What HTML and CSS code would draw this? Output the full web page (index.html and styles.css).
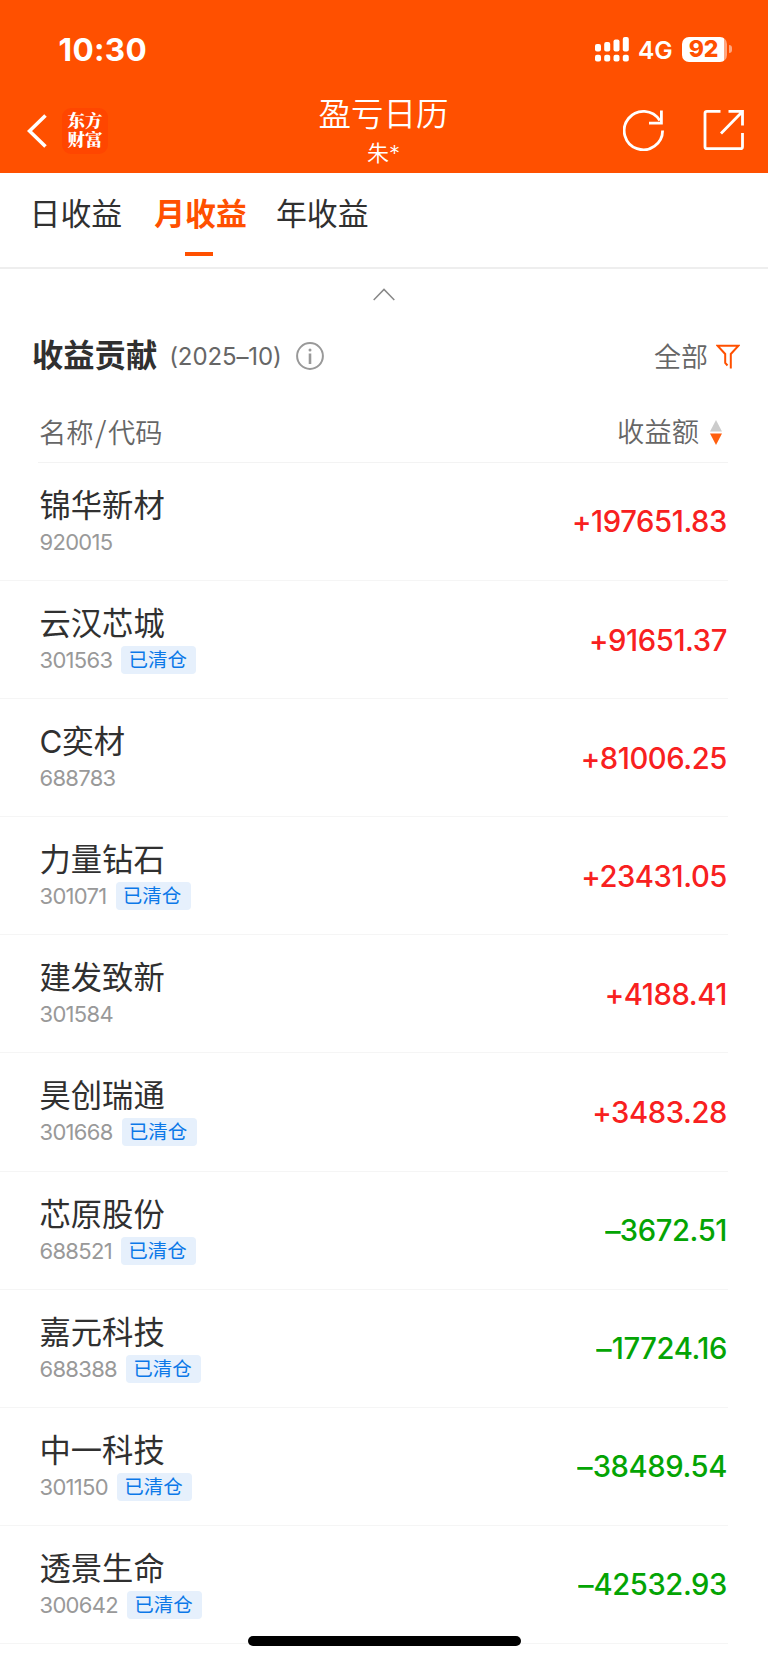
FILE: index.html
```html
<!DOCTYPE html>
<html lang="zh-CN">
<head>
<meta charset="utf-8">
<title>盈亏日历</title>
<link rel="stylesheet" href="styles.css">
</head>
<body>
<header class="top">
  <div class="status">
    <span class="clock">10:30</span>
    <div class="status-right">
      <svg class="signal" width="34" height="25" viewBox="0 0 34 25" fill="#fff">
        <rect x="0" y="7" width="6" height="7.5" rx="2"/><rect x="9.2" y="5" width="6" height="9.5" rx="2"/><rect x="18.5" y="2.6" width="6" height="11.9" rx="2"/><rect x="27.8" y="0" width="6" height="14.5" rx="2"/>
        <rect x="0" y="17.8" width="6" height="6.6" rx="2"/><rect x="9.2" y="17.8" width="6" height="6.6" rx="2"/><rect x="18.5" y="17.8" width="6" height="6.6" rx="2"/><rect x="27.8" y="17.8" width="6" height="6.6" rx="2"/>
      </svg>
      <span class="network">4G</span>
      <div class="battery"><span class="level">92</span></div>
      <i class="battery-cap"></i>
    </div>
  </div>
  <nav class="nav">
    <div class="nav-left">
      <svg width="20" height="34" viewBox="0 0 20 34" fill="none" stroke="#fff" stroke-width="3.6"><path d="M18.5 1.5 2.5 17l16 15.500"/></svg>
      <div class="logo">东方<br>财富</div>
    </div>
    <div class="heading"><h1>盈亏日历</h1><p>朱*</p></div>
    <div class="nav-right">
      <svg width="42" height="42" viewBox="0 0 42 42" fill="none" stroke="#fff" stroke-width="2.800"><path d="M39.600 21.500A19.200 19.200 0 1 1 36.800 11.600"/><path d="M38.400 1.500v12.600H26"/></svg>
      <svg width="42" height="42" viewBox="0 0 42 42" fill="none" stroke="#fff" stroke-width="2.800"><path d="M17.500 2.300H4q-2 0-2 2V37.700q0 2 2 2H37.500q2 0 2-2V24"/><path d="M25.500 2.300H39.500V16.500M39 3 18 24.500"/></svg>
    </div>
  </nav>
</header>
<div class="tabs">
  <span class="tab">日收益</span><span class="tab active">月收益</span><span class="tab">年收益</span>
</div>
<div class="collapse"><svg width="22" height="13" viewBox="0 0 22 13" fill="none" stroke="#888" stroke-width="1.500"><path d="M.7 12 11 1.400 21.300 12"/></svg></div>
<section class="title-row">
  <h2>收益贡献</h2><span class="period">(2025–10)</span>
  <svg class="info" width="28" height="28" viewBox="0 0 28 28"><circle cx="14" cy="14" r="12.900" fill="none" stroke="#999" stroke-width="2"/><path d="M14 11.500v10.500" stroke="#999" stroke-width="2.600"/><circle cx="14" cy="8" r="1.500" fill="#999"/></svg>
  <span class="filter">全部</span>
  <svg class="funnel" width="24" height="25" viewBox="0 0 24 25" fill="none" stroke="#ff5000" stroke-width="2"><path d="M11.500 21.500 9.200 18.800V10L1.500 1.700H22.500L14.800 10V24.500"/></svg>
</section>
<section class="columns">
  <span>名称<i class="slash">/</i>代码</span><span class="sort">收益额</span>
  <svg width="12" height="25" viewBox="0 0 12 25"><path d="M6 0 12 11.500H0z" fill="#ccc"/><path d="M0 13.500H12L6 25z" fill="#ff5f0f"/></svg>
</section>
<main class="list">
  <div class="row"><div class="stock"><b class="name">锦华新材</b><div class="meta"><span class="code">920015</span></div></div><span class="amount up">+197651.83</span></div>
  <div class="row"><div class="stock"><b class="name">云汉芯城</b><div class="meta"><span class="code">301563</span><em class="tag">已清仓</em></div></div><span class="amount up">+91651.37</span></div>
  <div class="row"><div class="stock"><b class="name">C奕材</b><div class="meta"><span class="code">688783</span></div></div><span class="amount up">+81006.25</span></div>
  <div class="row"><div class="stock"><b class="name">力量钻石</b><div class="meta"><span class="code">301071</span><em class="tag">已清仓</em></div></div><span class="amount up">+23431.05</span></div>
  <div class="row"><div class="stock"><b class="name">建发致新</b><div class="meta"><span class="code">301584</span></div></div><span class="amount up">+4188.41</span></div>
  <div class="row"><div class="stock"><b class="name">昊创瑞通</b><div class="meta"><span class="code">301668</span><em class="tag">已清仓</em></div></div><span class="amount up">+3483.28</span></div>
  <div class="row"><div class="stock"><b class="name">芯原股份</b><div class="meta"><span class="code">688521</span><em class="tag">已清仓</em></div></div><span class="amount down"><i class="minus">–</i>3672.51</span></div>
  <div class="row"><div class="stock"><b class="name">嘉元科技</b><div class="meta"><span class="code">688388</span><em class="tag">已清仓</em></div></div><span class="amount down"><i class="minus">–</i>17724.16</span></div>
  <div class="row"><div class="stock"><b class="name">中一科技</b><div class="meta"><span class="code">301150</span><em class="tag">已清仓</em></div></div><span class="amount down"><i class="minus">–</i>38489.54</span></div>
  <div class="row"><div class="stock"><b class="name">透景生命</b><div class="meta"><span class="code">300642</span><em class="tag">已清仓</em></div></div><span class="amount down"><i class="minus">–</i>42532.93</span></div>
</main>
<div class="home-bar"></div>
</body>
</html>
```
FILE: styles.css
```css
* { box-sizing: border-box; }
body { margin: 0; width: 768px; height: 1663px; overflow: hidden; position: relative; background: #fff; color: #303030; font-family: Inter, "Noto Sans CJK SC", sans-serif; }
h1, h2, p { margin: 0; font-weight: 400; }
svg { display: block; flex: none; }
.top { height: 173.300px; background: #ff5000; color: #fff; }
.status { height: 88px; padding: 10px 36px 0 58.500px; display: flex; align-items: center; justify-content: space-between; }
.clock { font-size: 31.500px; font-weight: 700; letter-spacing: .3px; }
.status-right { display: flex; align-items: center; }
.network { margin-left: 9px; width: 44px; font-size: 24.500px; font-weight: 600; line-height: 30px; padding-top: 1px; letter-spacing: -.1px; }
.battery { width: 45px; height: 25px; border-radius: 7px; background: linear-gradient(90deg, #fff 42px, #ffa780 42px); display: flex; justify-content: center; align-items: center; padding-right: 2px; }
.level { color: #ff5000; font-size: 23px; font-weight: 800; line-height: 25px; letter-spacing: -.2px; }
.battery-cap { width: 3px; height: 8px; margin-left: 2px; border-radius: 0 3px 3px 0; background: #ffa780; }
.nav { height: 85px; padding: 0 23px 0 27px; display: grid; grid-template-columns: 1fr auto 1fr; }
.nav-left { display: flex; align-items: center; gap: 15px; }
.logo { width: 46px; height: 46px; padding-top: 2px; text-align: center; border-radius: 9px; background: #ff4600; font: 900 17.500px/19.500px "Noto Serif CJK SC", "Noto Sans CJK SC", serif; }
.heading { text-align: center; padding-top: 5px; transform: translateX(-2.500px); }
.heading h1 { font-size: 32.500px; line-height: 44px; font-weight: 350; }
.heading p { font-size: 22px; line-height: 33px; font-weight: 350; }
.nav-right { display: flex; justify-content: flex-end; align-items: center; gap: 38px; padding-bottom: 2px; }
.tabs { height: 96.200px; border-bottom: 2px solid #eee; display: flex; padding: 18px 30px 0 29.500px; gap: 31px; }
.tab { font-size: 30.900px; line-height: 46px; height: 65px; }
.tab.active { color: #ff5000; font-weight: 600; display: flex; flex-direction: column; align-items: center; justify-content: space-between; padding-left: 1px; margin-right: -2px; }
.tab.active::after { content: ""; width: 28px; height: 4px; margin-right: 3px; background: #ff5000; }
.collapse { height: 50.500px; display: flex; justify-content: center; padding-top: 18.500px; }
.title-row { height: 72px; padding: 0 27px 0 32px; display: flex; align-items: center; }
.title-row h2 { font-size: 31.300px; line-height: 46px; font-weight: 600; }
.period { margin-left: 12px; padding-top: 2px; font-size: 24px; font-weight: 400; letter-spacing: -.1px; color: #666; }
.info { margin-left: 14.500px; }
.filter { margin-left: auto; font-size: 27px; color: #666; font-weight: 350; }
.funnel { margin-left: 8px; margin-top: 2px; margin-right: 1px; }
.columns { height: 71px; margin: 0 40px 0 38px; padding: 12px 6px 0 1px; border-bottom: 1px solid #f3f3f3; display: flex; align-items: center; color: #666; font-size: 27.300px; line-height: 36px; font-weight: 350; }
.columns span { margin-top: 1px; }
.slash { font: 350 29px/30px "Noto Sans CJK SC", sans-serif; margin: 0 1.500px; }
.sort { margin-left: auto; margin-right: 11px; }
.row { height: 118.100px; margin-right: 40px; padding: 21px 0 0 39.500px; border-bottom: 1.500px solid #f5f5f5; display: flex; justify-content: space-between; }
.name { display: block; font-size: 31.300px; line-height: 44px; font-weight: 400; }
.meta { display: flex; align-items: center; height: 28px; }
.code { color: #999; font-size: 22px; font-weight: 400; letter-spacing: -.7px; }
.tag { margin-left: 9px; width: 75px; height: 28px; border-radius: 4px; background: #e6f0fc; color: #0b78e8; font-size: 19.500px; line-height: 28px; padding-right: 2px; font-style: normal; text-align: center; }
.amount { font-size: 29.200px; line-height: 36px; font-weight: 500; margin-top: 20.500px; padding-right: 1px; letter-spacing: -.4px; }
.minus { display: inline-block; font-style: normal; transform: scaleX(1.05); transform-origin: right; }
.up { color: #f82020; }
.down { color: #04a404; }
.home-bar { position: absolute; left: 247.500px; top: 1636px; width: 273.500px; height: 10px; border-radius: 5px; background: #000; }
```
